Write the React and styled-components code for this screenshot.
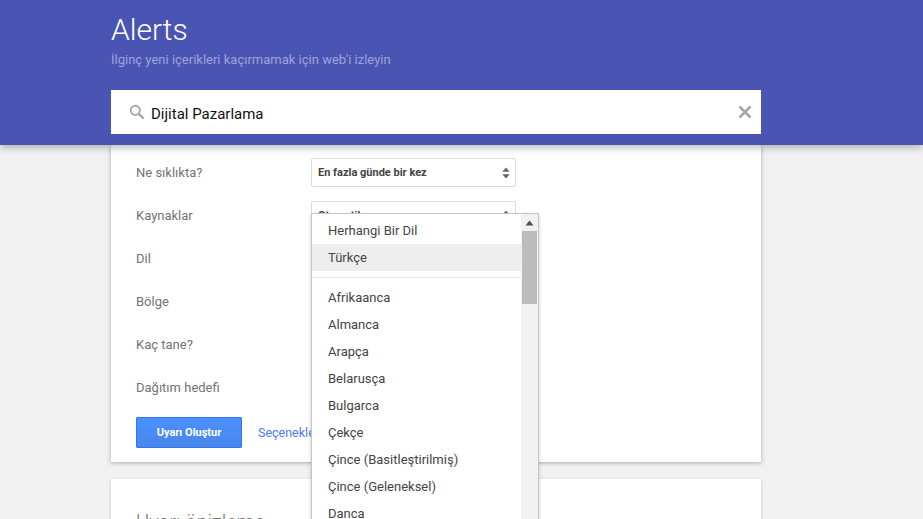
import React from "react";
import styled, { createGlobalStyle } from "styled-components";

const GlobalStyle = createGlobalStyle`
  html, body {
    margin: 0;
    height: 519px;
    overflow: hidden;
    background: #f1f1f1;
    font-family: Roboto, "Liberation Sans", sans-serif;
  }
`;

const languages = [
  "Afrikaanca",
  "Almanca",
  "Arapça",
  "Belarusça",
  "Bulgarca",
  "Çekçe",
  "Çince (Basitleştirilmiş)",
  "Çince (Geleneksel)",
  "Danca",
];

const fields = ["Ne sıklıkta?", "Kaynaklar", "Dil", "Bölge", "Kaç tane?", "Dağıtım hedefi"];

function Arrows() {
  return (
    <svg width="8" height="12" viewBox="0 0 8 12">
      <path d="M4 0.5L7.7 4.8H0.3Z" fill="#666" />
      <path d="M4 11.5L0.3 7.2H7.7Z" fill="#666" />
    </svg>
  );
}

export default function App() {
  return (
    <>
      <GlobalStyle />
      <Header>
        <Wrap>
          <Title>Alerts</Title>
          <Subtitle>İlginç yeni içerikleri kaçırmamak için web'i izleyin</Subtitle>
          <SearchBox>
            <svg width="16" height="16" viewBox="0 0 16 16">
              <circle cx="6.3" cy="6.3" r="4.6" fill="none" stroke="#a6a6a6" strokeWidth="1.9" />
              <path d="M9.8 9.8L14.6 14.6" stroke="#a6a6a6" strokeWidth="2.4" />
            </svg>
            <SearchText>Dijital Pazarlama</SearchText>
            <svg width="14" height="14" viewBox="0 0 14 14">
              <path d="M1.5 1.5L12.5 12.5M12.5 1.5L1.5 12.5" stroke="#a6a6a6" strokeWidth="2.6" />
            </svg>
          </SearchBox>
        </Wrap>
      </Header>
      <Wrap>
        <Card>
          <Form>
            {fields.map((label, index) => (
              <Row key={label}>
                <Label>{label}</Label>
                {index === 0 && (
                  <Select>
                    En fazla günde bir kez
                    <Arrows />
                  </Select>
                )}
                {index === 1 && (
                  <Select>
                    Otomatik
                    <Arrows />
                  </Select>
                )}
              </Row>
            ))}
            <Actions>
              <PrimaryButton>Uyarı Oluştur</PrimaryButton>
              <OptionsLink>Seçenekleri gizle</OptionsLink>
            </Actions>
          </Form>
          <Dropdown>
            <List>
              <Item>Herhangi Bir Dil</Item>
              <Item $active>Türkçe</Item>
              <Divider />
              {languages.map((name) => (
                <Item key={name}>{name}</Item>
              ))}
            </List>
            <Scrollbar>
              <ScrollArrow>
                <svg width="9" height="6" viewBox="0 0 9 6">
                  <path d="M4.5 0.5L8.5 5.5H0.5Z" fill="#505050" />
                </svg>
              </ScrollArrow>
              <Thumb />
            </Scrollbar>
          </Dropdown>
        </Card>
        <PreviewCard>
          <PreviewTitle>Uyarı önizleme</PreviewTitle>
        </PreviewCard>
      </Wrap>
    </>
  );
}

const Header = styled.header`
  position: relative;
  z-index: 2;
  height: 145px;
  background: #4a54b3;
  box-shadow: 0 2px 8px rgba(0, 0, 0, 0.3);
`;

const Wrap = styled.div`
  width: 650px;
  margin-left: 111px;
`;

const Title = styled.h1`
  margin: 0;
  padding-top: 11px;
  font-size: 30px;
  font-weight: 300;
  line-height: 37px;
  color: #fff;
`;

const Subtitle = styled.p`
  margin: 4px 0 0;
  font-size: 13px;
  line-height: 16px;
  color: #9da3da;
`;

const SearchBox = styled.div`
  display: flex;
  align-items: center;
  height: 44px;
  margin-top: 22px;
  padding: 0 9px 0 18px;
  background: #fff;
`;

const SearchText = styled.span`
  flex: 1;
  margin-left: 6px;
  padding-top: 4px;
  font-size: 15px;
  color: #111;
`;

const Card = styled.section`
  position: relative;
  height: 317px;
  background: #fff;
  box-shadow: 0 1px 4px rgba(0, 0, 0, 0.3);
`;

const Form = styled.div`
  padding: 6px 25px 0;
`;

const Row = styled.div`
  display: flex;
  align-items: center;
  height: 43px;
`;

const Label = styled.span`
  width: 175px;
  font-size: 13px;
  color: #737373;
`;

const Select = styled.div`
  box-sizing: border-box;
  display: flex;
  align-items: center;
  justify-content: space-between;
  width: 205px;
  height: 29px;
  padding: 0 5px 0 6px;
  border: 1px solid #dcdcdc;
  border-radius: 2px;
  font-size: 11px;
  font-weight: 700;
  color: #444;
`;

const Actions = styled.div`
  display: flex;
  align-items: center;
  margin-top: 8px;
`;

const PrimaryButton = styled.button`
  width: 106px;
  height: 31px;
  padding: 0;
  border: 1px solid #3079ed;
  border-radius: 1px;
  background: linear-gradient(#4d90fe, #4787ed);
  font-family: inherit;
  font-size: 11px;
  font-weight: 700;
  color: #fff;
`;

const OptionsLink = styled.a`
  margin-left: 16px;
  font-size: 12.5px;
  color: #4d7bf0;
  white-space: nowrap;
`;

const Dropdown = styled.div`
  position: absolute;
  top: 68px;
  left: 200px;
  box-sizing: border-box;
  display: flex;
  width: 228px;
  height: 320px;
  background: #fff;
  border: 1px solid #c4c4c4;
  box-shadow: 0 2px 4px rgba(0, 0, 0, 0.2);
`;

const List = styled.div`
  flex: 1;
  padding-top: 3px;
`;

const Item = styled.div`
  height: 27px;
  padding-left: 16px;
  font-size: 13px;
  line-height: 27px;
  color: #444;
  background: ${({ $active }) => ($active ? "#eeeeee" : "transparent")};
`;

const Divider = styled.div`
  height: 1px;
  margin: 6px 0 6px;
  background: #e6e6e6;
`;

const Scrollbar = styled.div`
  width: 17px;
  background: #f1f1f1;
`;

const ScrollArrow = styled.div`
  display: flex;
  align-items: center;
  justify-content: center;
  height: 17px;
`;

const Thumb = styled.div`
  width: 15px;
  height: 73px;
  margin: 0 auto;
  background: #bcbcbc;
`;

const PreviewCard = styled.section`
  height: 80px;
  margin-top: 17px;
  padding: 31px 25px 0;
  background: #fff;
  box-shadow: 0 1px 3px rgba(0, 0, 0, 0.2);
`;

const PreviewTitle = styled.h2`
  margin: 0;
  font-size: 20px;
  font-weight: 300;
  line-height: 24px;
  color: #737373;
`;
